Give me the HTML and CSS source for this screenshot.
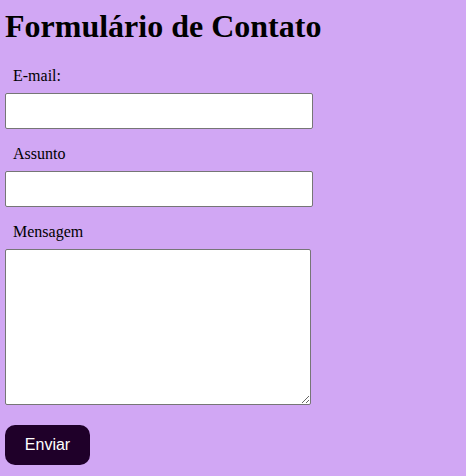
FILE: index.html
```html
<!DOCTYPE html>
<html lang="pt">
<head>
<meta charset="utf-8">
<title>Formulário de Contato</title>
<link rel="stylesheet" href="styles.css">
</head>
<body>
<h1 class="title">Formulário de Contato</h1>
<form class="form">
  <div class="field">
    <label class="label" for="email">E-mail:</label>
    <input class="input" id="email" type="email">
  </div>
  <div class="field">
    <label class="label" for="assunto">Assunto</label>
    <input class="input" id="assunto" type="text">
  </div>
  <div class="field field-last">
    <label class="label" for="msg">Mensagem</label>
    <textarea class="textarea" id="msg"></textarea>
  </div>
  <button class="button" type="submit">Enviar</button>
</form>
</body>
</html>
```
FILE: styles.css
```css
html, body {
  margin: 0;
  background: #d1a7f4;
}
body {
  padding: 0 5px;
  font-family: "Liberation Serif", "Times New Roman", serif;
  font-size: 16px;
  color: #000;
}
.title {
  margin: 8px 0 22px;
  font-size: 32px;
  font-weight: bold;
}
.form {
  display: flex;
  flex-direction: column;
  align-items: flex-start;
}
.field {
  display: flex;
  flex-direction: column;
  align-items: flex-start;
  margin-bottom: 16px;
}
.field-last {
  margin-bottom: 20px;
}
.label {
  display: block;
  padding: 0 8px;
  margin-bottom: 8px;
}
.input {
  box-sizing: border-box;
  width: 308px;
  height: 36px;
  margin: 0;
  border: 1px solid #767676;
  border-radius: 2px;
  background: #fff;
}
.textarea {
  box-sizing: border-box;
  width: 306px;
  height: 156px;
  margin: 0;
  border: 1px solid #767676;
  border-radius: 2px;
  background: #fff;
  display: block;
}
.button {
  width: 85px;
  height: 40px;
  border: none;
  border-radius: 10px;
  background: #1f0029;
  color: #fff;
  font-family: "Liberation Sans", Arial, sans-serif;
  font-size: 16px;
  cursor: pointer;
}
```
